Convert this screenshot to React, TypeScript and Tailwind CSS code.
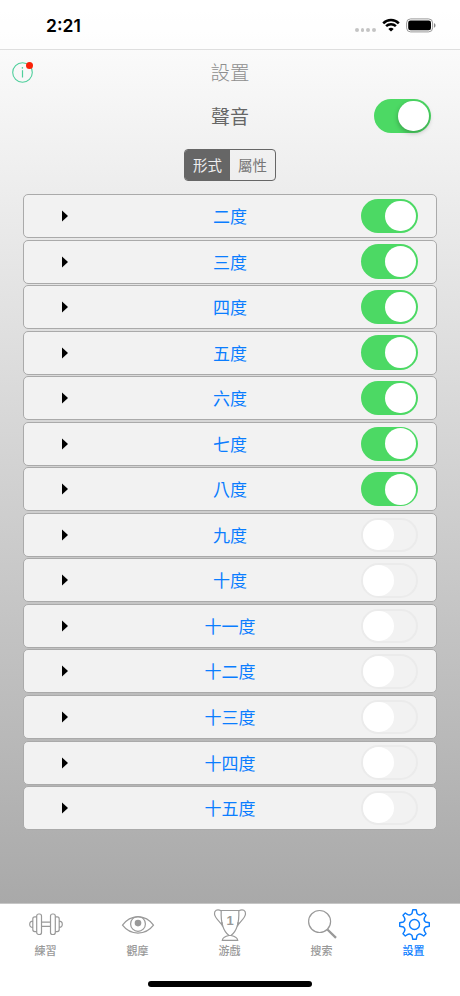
import React, { useState } from 'react'

interface Interval {
  label: string
  enabled: boolean
}

const INTERVALS: Interval[] = [
  { label: '二度', enabled: true },
  { label: '三度', enabled: true },
  { label: '四度', enabled: true },
  { label: '五度', enabled: true },
  { label: '六度', enabled: true },
  { label: '七度', enabled: true },
  { label: '八度', enabled: true },
  { label: '九度', enabled: false },
  { label: '十度', enabled: false },
  { label: '十一度', enabled: false },
  { label: '十二度', enabled: false },
  { label: '十三度', enabled: false },
  { label: '十四度', enabled: false },
  { label: '十五度', enabled: false },
]

const Switch: React.FC<{
  on: boolean
  label: string
  raised?: boolean
  onToggle: () => void
}> = ({ on, label, raised, onToggle }) => (
  <button
    role="switch"
    aria-checked={on}
    aria-label={label}
    onClick={onToggle}
    className={`flex h-[34.4px] w-[56.5px] shrink-0 items-center rounded-full ${
      on
        ? 'justify-end bg-[#4cd964] pr-[1.8px]'
        : 'justify-start border-2 border-[#ebebeb] bg-[#f2f2f2] pl-0'
    }`}
  >
    <span
      className={`size-[30.6px] rounded-full bg-white ${
        raised ? 'shadow-[0_2px_5px_rgba(0,0,0,0.28)]' : ''
      }`}
    />
  </button>
)

const StatusBar: React.FC = () => (
  <header className="flex h-[50px] shrink-0 items-start justify-between border-b border-[#dedede] bg-white/60 pl-[46px] pr-[24px]">
    <span className="mt-[14px] font-['Inter'] text-[17.5px] leading-[24px] font-semibold text-black">
      2:21
    </span>
    <div className="mt-[17px] flex h-[16px] items-center">
      <div className="mt-[10px] flex gap-[2px]">
        {[0, 1, 2, 3].map((dot) => (
          <span key={dot} className="size-[3.8px] rounded-full bg-[#c4c4c4]" />
        ))}
      </div>
      <svg width="18" height="14" viewBox="0 0 18 14" className="ml-[6px]">
        <path
          d="M1.2 5.3C5.5 1 12.5 1 16.8 5.3M4.1 8.2C6.8 5.5 11.2 5.5 13.9 8.2"
          fill="none"
          stroke="#000"
          strokeWidth="2.5"
        />
        <path d="M9 13.6 6.3 10.9Q9 8.6 11.7 10.9Z" fill="#000" />
      </svg>
      <svg width="30" height="15" viewBox="0 0 30 15" className="ml-[6px]">
        <rect x=".6" y=".9" width="26" height="13" rx="4" fill="none" stroke="#999" />
        <rect x="2.2" y="2.5" width="22.8" height="9.8" rx="2.3" fill="#000" />
        <path d="M28 5.3c2 .6 2 3.8 0 4.4Z" fill="#888" />
      </svg>
    </div>
  </header>
)

const DumbbellIcon = () => (
  <svg width="34" height="32" viewBox="0 0 34 32" fill="none" stroke="currentColor" strokeWidth="1.2">
    <rect x="7.7" y="5" width="4.8" height="20.5" rx="2" />
    <rect x="21.5" y="5" width="4.8" height="20.5" rx="2" />
    <path d="M7.7 7.9H5.8q-2 0-2 2v10.7q0 2 2 2h1.9M26.3 7.9h1.9q2 0 2 2v10.7q0 2-2 2h-1.9M3.8 12.2Q.7 12.2.7 15.3t3.1 3.1M30.2 12.2q3.1 0 3.1 3.1t-3.1 3.1M12.5 13.2h9M12.5 17.3h9" />
  </svg>
)

const EyeIcon = () => (
  <svg width="34" height="32" viewBox="0 0 34 32" fill="none" stroke="currentColor" strokeWidth="1.2">
    <path d="M1.5 16.2C9.5 5.2 24.5 5.2 32.5 16.2 24.5 26.7 9.5 26.7 1.5 16.2Z" />
    <circle cx="17" cy="14.9" r="7.4" />
    <circle cx="17" cy="14.1" r="3.3" fill="currentColor" stroke="none" />
  </svg>
)

const TrophyIcon = () => (
  <span className="relative block h-[34px] w-[34px]">
    <svg width="34" height="34" viewBox="0 0 34 34" fill="none" stroke="currentColor" strokeWidth="1.2">
      <path d="M8.2 2.5h17.6C26.3 14 23.4 23.5 18 27.5h-2C10.6 23.5 7.7 14 8.2 2.5Z" />
      <path d="M8.2 2.7C4 .7 1.2 2.5 1.5 6c.4 4.8 6.7 8.1 8.2 12.5M25.8 2.7c4.2-2 7-.2 6.7 3.3-.4 4.8-6.7 8.1-8.2 12.5M9.7 18.5 8.9 14M24.3 18.5l.8-4.5" />
      <path d="M16 27.5Q9.7 28.8 9.3 32.3h15.4q-.4-3.5-6.7-4.8" />
    </svg>
    <span className="absolute top-[5px] left-0 w-full text-center font-['Liberation_Sans'] text-[13px] leading-[15px] font-bold">
      1
    </span>
  </span>
)

const SearchIcon = () => (
  <svg width="34" height="34" viewBox="0 0 34 34" fill="none" stroke="currentColor">
    <circle cx="14.6" cy="13.5" r="11" strokeWidth="1.2" />
    <path d="m22.4 21.5 8.6 8.4" strokeWidth="2.3" />
  </svg>
)

const GearIcon = () => (
  <svg width="34" height="34" viewBox="-17.5 -16.5 34 34" fill="none" stroke="currentColor" strokeWidth="1.4" strokeLinejoin="round">
    <path d="M-1.7-14.8H1.7L2.5-11Q4.7-8.6 7.2-10.2L9.2-11.5 11.5-9.2 10.2-7.2Q8.6-4.7 11-2.5L14.8-1.7V1.7L11 2.5Q8.6 4.7 10.2 7.2L11.5 9.2 9.2 11.5 7.2 10.2Q4.7 8.6 2.5 11L1.7 14.8H-1.7L-2.5 11Q-4.7 8.6-7.2 10.2L-9.2 11.5-11.5 9.2-10.2 7.2Q-8.6 4.7-11 2.5L-14.8 1.7V-1.7L-11-2.5Q-8.6-4.7-10.2-7.2L-11.5-9.2-9.2-11.5-7.2-10.2Q-4.7-8.6-2.5-11Z" />
    <circle r="5" />
  </svg>
)

const TABS = [
  { label: '練習', icon: <DumbbellIcon /> },
  { label: '觀摩', icon: <EyeIcon /> },
  { label: '游戲', icon: <TrophyIcon /> },
  { label: '搜索', icon: <SearchIcon /> },
  { label: '設置', icon: <GearIcon />, active: true },
]

const TabBar: React.FC = () => (
  <footer className="flex h-[93px] shrink-0 flex-col items-center border-t border-[#c6c6c6] bg-white">
    <nav className="grid w-full grid-cols-5">
      {TABS.map((tab) => (
        <button
          key={tab.label}
          className={`flex flex-col items-center ${
            tab.active ? 'text-[#0a7dff]' : 'text-[#999]'
          }`}
        >
          <span className="mt-[3px] flex h-[36px] items-center">{tab.icon}</span>
          <span className="pr-px text-[11px] leading-[14px] font-medium">{tab.label}</span>
        </button>
      ))}
    </nav>
    <div className="mt-[24px] h-[6px] w-[164px] rounded-full bg-black" />
  </footer>
)

export default function App() {
  const [intervals, setIntervals] = useState(INTERVALS)
  const [sound, setSound] = useState(true)
  const [segment, setSegment] = useState(0)

  const toggle = (index: number) => {
    setIntervals((rows) =>
      rows.map((row, i) => (i === index ? { ...row, enabled: !row.enabled } : row)),
    )
  }

  return (
    <div className="flex h-[996px] w-[460px] flex-col overflow-hidden bg-[linear-gradient(to_bottom,#fff_0,#a9a9a9_903px)] font-['Noto_Sans_CJK_TC',sans-serif]">
      <StatusBar />

      <main className="flex flex-1 flex-col">
        <div className="grid h-[44px] grid-cols-[1fr_auto_1fr] items-center px-[12px]">
          {/* Info button with unread marker */}
          <button aria-label="info" className="relative size-[21px]">
            <svg width="21" height="21" viewBox="0 0 21 21" fill="none" stroke="#4fcf9c">
              <circle cx="10.5" cy="10.5" r="9.8" strokeWidth="1.1" />
              <path d="M10.5 8.2v7.3" strokeWidth="1.2" />
              <circle cx="10.4" cy="5.9" r=".8" fill="#4fcf9c" stroke="none" />
            </svg>
            <span className="absolute top-0 right-0 size-[7px] rounded-full bg-[#fa2208]" />
          </button>
          <h1 className="text-[19.5px] leading-[28px] font-light text-[#8e8e8e]">設置</h1>
        </div>

        <div className="grid h-[44px] grid-cols-[1fr_auto_1fr] items-center px-[29.4px]">
          <span />
          <span className="text-[19px] leading-[28px] text-[#666]">聲音</span>
          <div className="flex justify-end">
            <Switch on={sound} label="聲音" raised onToggle={() => setSound(!sound)} />
          </div>
        </div>

        <div className="mx-auto mt-[11px] flex h-[32px] w-[92px] overflow-hidden rounded-[4px] border border-[#666]">
          {['形式', '屬性'].map((name, i) => (
            <button
              key={name}
              onClick={() => setSegment(i)}
              className={`flex-1 text-[14.5px] ${
                segment === i ? 'bg-[#666] text-[#eee]' : 'text-[#777]'
              }`}
            >
              {name}
            </button>
          ))}
        </div>

        <ul className="mx-[23px] mt-[13px] flex flex-col gap-[1.56px]">
          {intervals.map((row, i) => (
            <li
              key={row.label}
              className="grid h-[44px] grid-cols-[1fr_auto_1fr] items-center rounded-[5px] border border-[#aaa] bg-[#f2f2f2] pr-[18.5px] pl-[18.5px]"
            >
              <svg width="6" height="12" viewBox="0 0 6 12" className="ml-[19.5px]">
                <path d="M0 .5 6 6 0 11.5Z" fill="#000" />
              </svg>
              <span className="text-[17px] leading-[24px] text-[#0a7dff]">{row.label}</span>
              <div className="flex justify-end">
                <Switch on={row.enabled} label={row.label} onToggle={() => toggle(i)} />
              </div>
            </li>
          ))}
        </ul>
      </main>

      <TabBar />
    </div>
  )
}
